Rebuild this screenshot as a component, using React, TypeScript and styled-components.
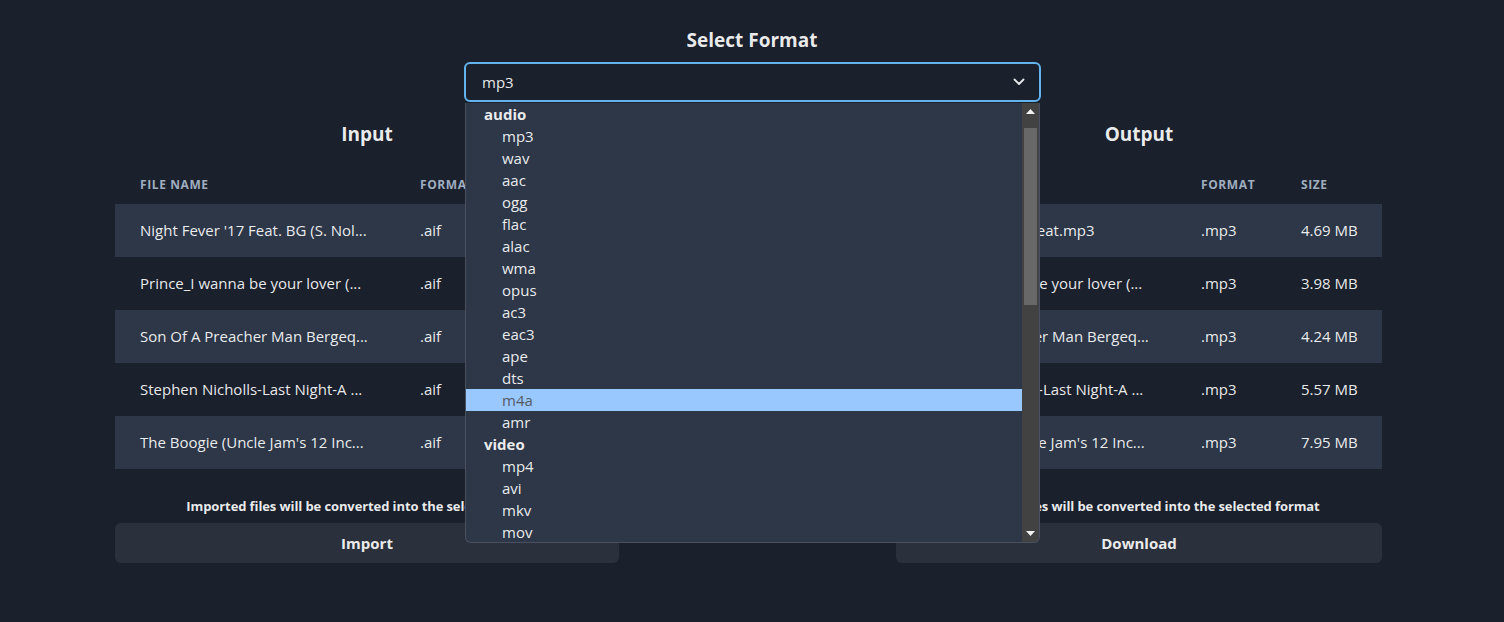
import React from "react";
import styled, { createGlobalStyle } from "styled-components";

const GlobalStyle = createGlobalStyle`
  html, body { margin: 0; padding: 0; }
  body {
    background: #1a202c;
    color: rgba(255, 255, 255, 0.92);
    font-family: "Open Sans", "Noto Sans", sans-serif;
    width: 1504px;
    height: 622px;
    overflow: hidden;
  }
`;

const Page = styled.div`
  display: flex;
  flex-direction: column;
  padding-top: 27px;
`;

const FormatSection = styled.div`
  display: flex;
  flex-direction: column;
  align-items: center;
  gap: 9px;
`;

const Heading = styled.h2`
  margin: 0;
  font-size: 19px;
  line-height: 26px;
  font-weight: 700;
  color: rgba(255, 255, 255, 0.92);
  text-align: center;
`;

const SelectWrap = styled.div`
  position: relative;
  width: 577px;
  margin-left: 1px;
`;

const SelectBox = styled.div`
  box-sizing: border-box;
  height: 40px;
  border: 2px solid #63b3ed;
  border-radius: 6px;
  display: flex;
  align-items: center;
  justify-content: space-between;
  padding: 0 14px 0 16px;
  font-size: 15px;
  color: rgba(255, 255, 255, 0.92);
`;

const Dropdown = styled.div`
  position: absolute;
  top: 41px;
  left: 1px;
  width: 575px;
  height: 440px;
  box-sizing: border-box;
  background: #2d3748;
  border: 1px solid #4a5060;
  border-top: none;
  border-radius: 0 0 6px 6px;
  overflow: hidden;
  display: flex;
  z-index: 10;
`;

const OptionList = styled.div`
  flex: 1;
  display: flex;
  flex-direction: column;
`;

const OptionRow = styled.div<{ $group?: boolean; $active?: boolean }>`
  height: 22px;
  flex: none;
  display: flex;
  align-items: center;
  padding-left: ${(p) => (p.$group ? "18px" : "36px")};
  font-size: 15px;
  font-weight: ${(p) => (p.$group ? 700 : 400)};
  background: ${(p) => (p.$active ? "#99c8ff" : "transparent")};
  color: ${(p) => (p.$active ? "#555b66" : "rgba(255, 255, 255, 0.92)")};
`;

const Scrollbar = styled.div`
  width: 17px;
  flex: none;
  background: #424242;
  display: flex;
  flex-direction: column;
  align-items: center;
`;

const ScrollArrow = styled.div`
  height: 17px;
  width: 17px;
  display: flex;
  align-items: center;
  justify-content: center;
  flex: none;
`;

const ScrollTrack = styled.div`
  flex: 1;
  width: 100%;
  padding-top: 8px;
  box-sizing: border-box;
`;

const ScrollThumb = styled.div`
  width: 13px;
  height: 177px;
  margin: 0 auto;
  background: #686868;
`;

const Columns = styled.div`
  display: grid;
  grid-template-columns: 504px 486px;
  column-gap: 277px;
  margin-left: 115px;
  margin-top: 19px;
`;

const Column = styled.div`
  display: flex;
  flex-direction: column;
  align-items: stretch;
`;

const ColumnTitle = styled.h2`
  margin: 0 0 18px;
  font-size: 19px;
  line-height: 26px;
  font-weight: 700;
  text-align: center;
  color: rgba(255, 255, 255, 0.92);
`;

const Table = styled.table`
  width: 100%;
  border-collapse: collapse;
  table-layout: fixed;
`;

const Th = styled.th<{ $w?: number }>`
  box-sizing: border-box;
  width: ${(p) => (p.$w ? `${p.$w}px` : "auto")};
  text-align: left;
  padding: 12px 8px 11px 25px;
  font-size: 12px;
  line-height: 16px;
  font-weight: 700;
  letter-spacing: 0.05em;
  text-transform: uppercase;
  color: #a0aec0;
  white-space: nowrap;
  overflow: hidden;
`;

const Tr = styled.tr<{ $striped?: boolean }>`
  background: ${(p) => (p.$striped ? "#2d3748" : "transparent")};
`;

const Td = styled.td`
  box-sizing: border-box;
  padding: 16px 8px 17px 25px;
  font-size: 15px;
  line-height: 20px;
  color: rgba(255, 255, 255, 0.92);
  white-space: nowrap;
  overflow: hidden;
`;

const Note = styled.p`
  margin: 28px 0 8px;
  font-size: 13px;
  line-height: 18px;
  font-weight: 700;
  letter-spacing: -0.1px;
  text-align: center;
  color: rgba(255, 255, 255, 0.92);
`;

const ActionButton = styled.button`
  height: 40px;
  border: none;
  border-radius: 6px;
  background: rgba(255, 255, 255, 0.08);
  color: rgba(255, 255, 255, 0.92);
  font-family: inherit;
  font-size: 15px;
  font-weight: 700;
  cursor: pointer;
`;

const Triangle = ({ down }: { down?: boolean }) => (
  <svg width="9" height="5" viewBox="0 0 9 5">
    <polygon points={down ? "0,0 9,0 4.5,5" : "0,5 9,5 4.5,0"} fill="#f2f2f2" />
  </svg>
);

const Chevron = () => (
  <svg width="12" height="8" viewBox="0 0 12 8" fill="none">
    <path d="M1.5 1.5 L6 6 L10.5 1.5" stroke="rgba(255,255,255,0.9)" strokeWidth="1.8" strokeLinecap="round" strokeLinejoin="round" />
  </svg>
);

type Row = { name: string; format: string; size: string };

const inputRows: Row[] = [
  { name: "Night Fever '17 Feat. BG (S. Nol...", format: ".aif", size: "47.12 MB" },
  { name: "Prince_I wanna be your lover (...", format: ".aif", size: "40.05 MB" },
  { name: "Son Of A Preacher Man Bergeq...", format: ".aif", size: "42.68 MB" },
  { name: "Stephen Nicholls-Last Night-A ...", format: ".aif", size: "56.11 MB" },
  { name: "The Boogie (Uncle Jam's 12 Inc...", format: ".aif", size: "80.02 MB" },
];

const outputRows: Row[] = [
  { name: "Night Fever '17 Feat.mp3", format: ".mp3", size: "4.69 MB" },
  { name: "Prince_I wanna be your lover (...", format: ".mp3", size: "3.98 MB" },
  { name: "Son Of A Preacher Man Bergeq...", format: ".mp3", size: "4.24 MB" },
  { name: "Stephen Nicholls-Last Night-A ...", format: ".mp3", size: "5.57 MB" },
  { name: "The Boogie (Uncle Jam's 12 Inc...", format: ".mp3", size: "7.95 MB" },
];

const options: { label: string; group?: boolean; active?: boolean }[] = [
  { label: "audio", group: true },
  { label: "mp3" },
  { label: "wav" },
  { label: "aac" },
  { label: "ogg" },
  { label: "flac" },
  { label: "alac" },
  { label: "wma" },
  { label: "opus" },
  { label: "ac3" },
  { label: "eac3" },
  { label: "ape" },
  { label: "dts" },
  { label: "m4a", active: true },
  { label: "amr" },
  { label: "video", group: true },
  { label: "mp4" },
  { label: "avi" },
  { label: "mkv" },
  { label: "mov" },
];

const FileTable = ({ rows, widths }: { rows: Row[]; widths: [number, number, number] }) => (
  <Table>
    <thead>
      <tr>
        <Th $w={widths[0]}>File Name</Th>
        <Th $w={widths[1]}>Format</Th>
        <Th $w={widths[2]}>Size</Th>
      </tr>
    </thead>
    <tbody>
      {rows.map((r, i) => (
        <Tr key={i} $striped={i % 2 === 0}>
          <Td>{r.name}</Td>
          <Td>{r.format}</Td>
          <Td>{r.size}</Td>
        </Tr>
      ))}
    </tbody>
  </Table>
);

export default function App() {
  return (
    <>
      <GlobalStyle />
      <Page>
        <FormatSection>
          <Heading>Select Format</Heading>
          <SelectWrap>
            <SelectBox>
              <span>mp3</span>
              <Chevron />
            </SelectBox>
            <Dropdown>
              <OptionList>
                {options.map((o) => (
                  <OptionRow key={o.label} $group={o.group} $active={o.active}>
                    {o.label}
                  </OptionRow>
                ))}
              </OptionList>
              <Scrollbar>
                <ScrollArrow>
                  <Triangle />
                </ScrollArrow>
                <ScrollTrack>
                  <ScrollThumb />
                </ScrollTrack>
                <ScrollArrow>
                  <Triangle down />
                </ScrollArrow>
              </Scrollbar>
            </Dropdown>
          </SelectWrap>
        </FormatSection>
        <Columns>
          <Column>
            <ColumnTitle>Input</ColumnTitle>
            <FileTable rows={inputRows} widths={[280, 100, 124]} />
            <Note>Imported files will be converted into the selected format</Note>
            <ActionButton>Import</ActionButton>
          </Column>
          <Column>
            <ColumnTitle>Output</ColumnTitle>
            <FileTable rows={outputRows} widths={[280, 100, 106]} />
            <Note>Imported files will be converted into the selected format</Note>
            <ActionButton>Download</ActionButton>
          </Column>
        </Columns>
      </Page>
    </>
  );
}
